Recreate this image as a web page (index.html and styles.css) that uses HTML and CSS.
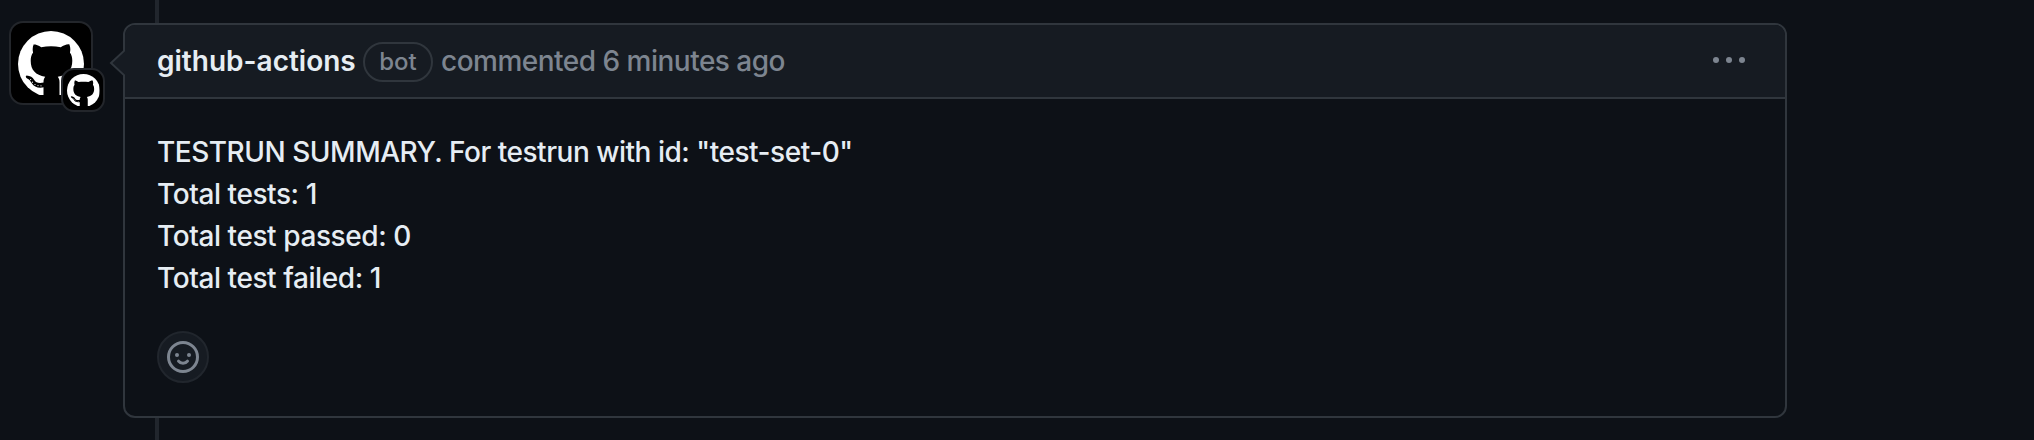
FILE: index.html
```html
<!DOCTYPE html>
<html lang="en">
<head>
<meta charset="utf-8">
<title>Comment</title>
<link rel="stylesheet" href="styles.css">
</head>
<body>
<svg class="defs" aria-hidden="true">
  <symbol id="mark" viewBox="0 0 66 66">
    <circle cx="33" cy="33" r="33" fill="#fff"/>
    <path fill="#000" d="M14.7 13.2c2.8-.3 5.800 1.200 8.500 3 6.400-1.200 13.200-1.200 19.600 0 2.700-1.800 5.700-3.300 8.500-3 1.200 2.800 1.300 5.600.6 8.400 1.700 2.200 2.400 5 2.400 8.200 0 9.400-4.800 14.200-14.500 16 1.200 1.400 1.700 3.200 1.700 5.400V66h-16V51.200c0-2.200.5-4 1.700-5.400-9.700-1.800-14.500-6.600-14.500-16 0-3.200.7-6 2.400-8.200-.7-2.800-.6-5.600.6-8.400z"/>
    <path fill="#000" d="M8.500 44.500c4 .2 6 1.800 7.600 4.300 1.800 2.900 4.600 3.900 9.900 2.700v4.800c-5.800 1.100-9.800-.2-12.200-4.100-1.400-2.500-2.500-3.800-4.700-4.800-1.300-.7-1.900-2.100-.6-2.900z"/>
    <g fill="#fff"><circle cx="12.600" cy="48.600" r=".6"/><circle cx="14.500" cy="51.200" r=".6"/><circle cx="17" cy="53.500" r=".6"/><circle cx="20" cy="54.600" r=".6"/><circle cx="23" cy="54.800" r=".6"/></g>
  </symbol>
</svg>
<main class="timeline-item">
  <div class="avatars">
    <div class="avatar"><svg class="avatar-mark"><use href="#mark"/></svg></div>
    <div class="avatar-badge"><svg class="badge-mark"><use href="#mark"/></svg></div>
  </div>
  <article class="comment">
    <svg class="caret" viewBox="0 0 16 28"><path d="M16 1 2 14l14 13" fill="#161b22" stroke="#30363d" stroke-width="2"/></svg>
    <header class="comment-header">
      <strong class="author">github-actions</strong>
      <span class="label">bot</span>
      <span class="meta">commented 6 minutes ago</span>
      <svg class="kebab" viewBox="0 0 32 6"><circle cx="3" cy="3" r="3"/><circle cx="16" cy="3" r="3"/><circle cx="29" cy="3" r="3"/></svg>
    </header>
    <div class="comment-body">
      <p class="line summary">TESTRUN SUMMARY. For testrun with id: "test-set-0"</p>
      <p class="line">Total tests: 1</p>
      <p class="line">Total test passed: 0</p>
      <p class="line">Total test failed: 1</p>
      <button class="react" aria-label="Add reaction">
        <svg class="smiley" viewBox="0 0 32 32"><circle cx="16" cy="16" r="14.500"/><path d="M11.500 20.200c1.100 1.500 2.600 2.100 4.500 2.100s3.400-.6 4.500-2.100"/><g class="eyes"><circle cx="10" cy="14" r="2"/><circle cx="22" cy="14" r="2"/></g></svg>
      </button>
    </div>
  </article>
</main>
</body>
</html>
```
FILE: styles.css
```css
* { box-sizing: border-box; }
body {
  margin: 0;
  background: #0d1117;
  color: #e6edf3;
  font-family: Inter, "Noto Sans", sans-serif;
  font-size: 28px;
}
.defs { position: absolute; width: 0; height: 0; }
.timeline-item {
  display: flex;
  align-items: flex-start;
  height: 440px;
  padding: 21px 0 0 9px;
  background: linear-gradient(#21262d, #21262d) 155px 0 / 4px 100% no-repeat;
}
.avatars { position: relative; width: 114px; flex: none; }
.avatar, .avatar-badge {
  display: flex;
  justify-content: center;
  background: #000;
  border: 2px solid #23262b;
}
.avatar { width: 84px; height: 84px; border-radius: 14px; padding-top: 8px; overflow: hidden; }
.avatar-mark { width: 66px; height: 66px; flex: none; clip-path: inset(0 0 2px 0); }
.avatar-badge {
  position: absolute;
  left: 52px;
  top: 47px;
  width: 44px;
  height: 44px;
  border-radius: 13px;
  padding-top: 4px;
}
.badge-mark { width: 33px; height: 33px; flex: none; clip-path: inset(0 0 1px 0); }
.comment {
  position: relative;
  width: 1664px;
  height: 395px;
  margin-top: 2px;
  border: 2px solid #30363d;
  border-radius: 12px;
  background: #0d1117;
}
.caret { position: absolute; left: -16px; top: 24px; width: 16px; height: 28px; }
.comment-header {
  display: flex;
  align-items: center;
  height: 74px;
  padding: 0 40px 0 32px;
  background: #161b22;
  border-bottom: 2px solid #30363d;
  border-radius: 10px 10px 0 0;
  line-height: 42px;
  white-space: nowrap;
}
.author { font-weight: 600; width: 206px; }
.label {
  width: 70px;
  height: 40px;
  margin: 2px 8px 0 0;
  border: 2px solid #30363d;
  border-radius: 20px;
  color: #7d8590;
  font-size: 24px;
  font-weight: 500;
  line-height: 36px;
  text-align: center;
}
.meta { color: #7d8590; font-weight: 450; letter-spacing: -0.51px; }
.kebab { width: 32px; height: 6px; margin: 0 0 2px auto; fill: #7d8590; }
.comment-body { padding: 32px; }
.line { margin: 0; line-height: 42px; font-weight: 450; letter-spacing: -0.42px; }
.summary { letter-spacing: -0.48px; }
.react {
  display: flex;
  align-items: center;
  justify-content: center;
  width: 52px;
  height: 52px;
  margin: 32px 0 0;
  padding: 0;
  border: 2px solid #21262d;
  border-radius: 50%;
  background: #161b22;
}
.smiley { width: 32px; height: 32px; fill: none; stroke: #7d8590; stroke-width: 3; stroke-linecap: round; }
.eyes { fill: #7d8590; stroke: none; }
```
